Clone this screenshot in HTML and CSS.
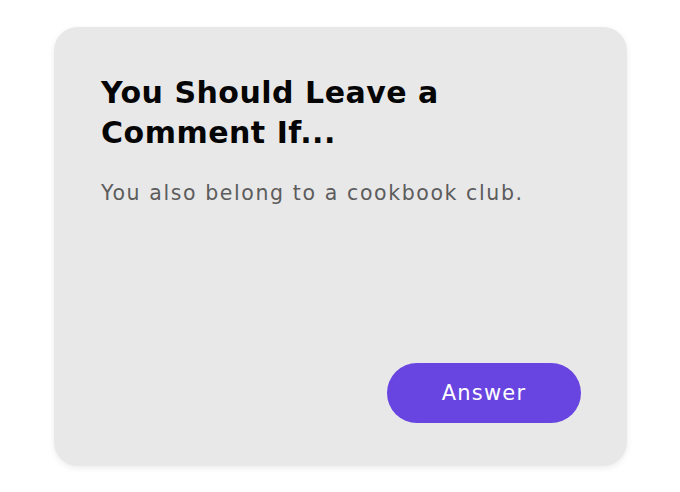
FILE: index.html
```html
<!DOCTYPE html>
<html>
<head>
<meta charset="utf-8">
<link rel="stylesheet" href="styles.css">
</head>
<body>
<div class="page">
  <div class="card">
    <h1 class="title">You Should Leave a Comment If...</h1>
    <p class="text">You also belong to a cookbook club.</p>
    <div class="actions">
      <button class="btn">Answer</button>
    </div>
  </div>
</div>
</body>
</html>
```

FILE: styles.css
```css
html, body {
  margin: 0;
  padding: 0;
  background: #ffffff;
}
.page {
  width: 680px;
  height: 492px;
  padding: 27px 53px 26px 54px;
  box-sizing: border-box;
}
.card {
  height: 100%;
  box-sizing: border-box;
  background: #e9e8e9;
  border-radius: 24px;
  box-shadow: 0 2px 6px rgba(0,0,0,0.08);
  padding: 46px 46px 43px 47px;
  display: flex;
  flex-direction: column;
  font-family: "DejaVu Sans", "Liberation Sans", sans-serif;
}
.title {
  margin: 0;
  font-size: 30px;
  line-height: 40px;
  font-weight: 700;
  color: #050505;
  width: 400px;
  letter-spacing: 0.5px;
}
.text {
  margin: 26px 0 0 0;
  font-size: 20.5px;
  line-height: 28px;
  color: #5c5c5c;
  letter-spacing: 1.6px;
}
.actions {
  margin-top: auto;
  display: flex;
  justify-content: flex-end;
}
.btn {
  width: 194px;
  height: 60px;
  border: none;
  border-radius: 30px;
  background: #6845e0;
  color: #ffffff;
  font-family: "DejaVu Sans", "Liberation Sans", sans-serif;
  font-size: 21px;
  font-weight: 400;
  letter-spacing: 1.2px;
  padding: 0;
}
```
